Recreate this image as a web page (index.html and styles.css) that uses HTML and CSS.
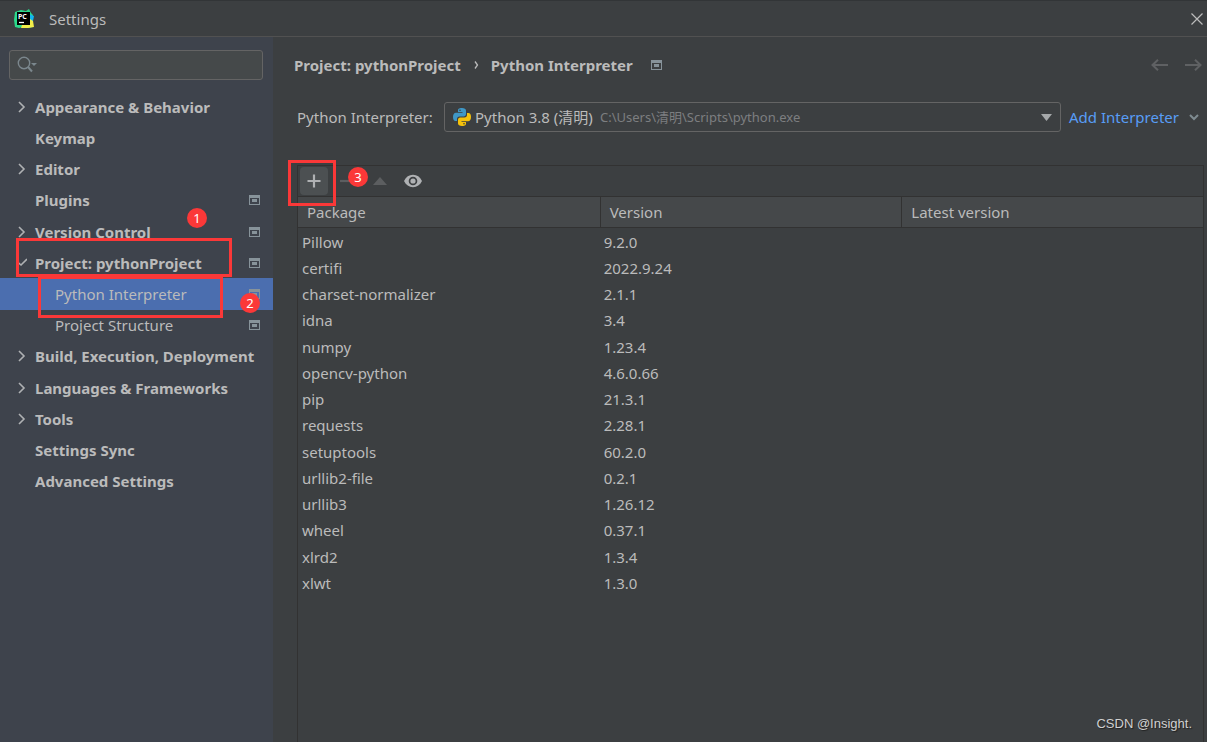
FILE: index.html
```html
<!DOCTYPE html>
<html lang="en">
<head>
<meta charset="utf-8">
<title>Settings</title>
<link rel="stylesheet" href="styles.css">
</head>
<body>
<svg class="defs" aria-hidden="true">
  <symbol id="right" viewBox="0 0 10 12"><path d="M2 1l5 5-5 5" fill="none" stroke="#afb1b3" stroke-width="1.600"/></symbol>
  <symbol id="down" viewBox="0 0 10 12"><path d="M0 4.500L4 8l6-6" fill="none" stroke="#afb1b3" stroke-width="1.600"/></symbol>
  <symbol id="scope" viewBox="0 0 11 10"><path d="M0 0h11v10H0zM1 3v6h9V3z" fill="#87939a" fill-rule="evenodd"/><path d="M3 4h5v3H3z" fill="#87939a"/></symbol>
</svg>
<div class="window">
  <header class="titlebar">
    <svg class="logo" viewBox="0 0 20 20" aria-hidden="true">
      <path d="M1 3l6-2 5 1 3-2 2 4 2 2-1 5 1 7-5 1-5-1-4 1-4-1-1-7z" fill="#2bd98b"/>
      <path d="M15 5l5 2-1 5-4 1z" fill="#12b5ee"/>
      <path d="M16 10l3 2 1 6-6 1-7 0 1-3z" fill="#f3ee4a"/>
      <path d="M3 3h13v13H3z" fill="#000"/>
      <text class="logo-text" x="4" y="10">PC</text>
      <path d="M5 13.500h5" stroke="#fff" stroke-width="1.300"/>
    </svg>
    <h1 class="title">Settings</h1>
    <button class="icon-btn close" aria-label="Close"><svg width="12" height="12" viewBox="0 0 12 12"><path d="M.5.5l11 11M11.500.5l-11 11" stroke="#bbb" stroke-width="1.200"/></svg></button>
  </header>
  <div class="body">
    <aside class="sidebar">
      <div class="search">
        <svg class="search-icon" width="22" height="18" viewBox="0 0 22 18" aria-hidden="true"><circle cx="7" cy="7" r="5.700" fill="none" stroke="#7b878d" stroke-width="1.400"/><path d="M11 11l4 4.500" stroke="#7b878d" stroke-width="2"/><path d="M14 7h6l-3 3z" fill="#7b878d"/></svg>
        <input class="search-input" type="text" aria-label="Search settings">
      </div>
      <nav class="nav" aria-label="Settings categories">
        <a class="item" href="#"><svg class="arrow"><use href="#right"/></svg><span class="label">Appearance &amp; Behavior</span></a>
        <a class="item" href="#"><span class="arrow"></span><span class="label">Keymap</span></a>
        <a class="item" href="#"><svg class="arrow"><use href="#right"/></svg><span class="label">Editor</span></a>
        <a class="item" href="#"><span class="arrow"></span><span class="label">Plugins</span><svg class="scope"><use href="#scope"/></svg></a>
        <a class="item" href="#"><svg class="arrow"><use href="#right"/></svg><span class="label">Version Control</span><svg class="scope"><use href="#scope"/></svg><span class="badge badge-one">1</span></a>
        <a class="item" href="#"><svg class="arrow"><use href="#down"/></svg><span class="label">Project: pythonProject</span><svg class="scope"><use href="#scope"/></svg><span class="mark mark-project"></span></a>
        <a class="item child selected" href="#"><span class="label">Python Interpreter</span><svg class="scope"><use href="#scope"/></svg><span class="mark mark-interpreter"></span><span class="badge badge-two">2</span></a>
        <a class="item child" href="#"><span class="label">Project Structure</span><svg class="scope"><use href="#scope"/></svg></a>
        <a class="item" href="#"><svg class="arrow"><use href="#right"/></svg><span class="label">Build, Execution, Deployment</span></a>
        <a class="item" href="#"><svg class="arrow"><use href="#right"/></svg><span class="label">Languages &amp; Frameworks</span></a>
        <a class="item" href="#"><svg class="arrow"><use href="#right"/></svg><span class="label">Tools</span></a>
        <a class="item" href="#"><span class="arrow"></span><span class="label">Settings Sync</span></a>
        <a class="item" href="#"><span class="arrow"></span><span class="label">Advanced Settings</span></a>
      </nav>
    </aside>
    <main class="main">
      <div class="crumbs">
        <span>Project: pythonProject</span>
        <svg width="5" height="8" viewBox="0 0 5 8" aria-hidden="true"><path d="M1 .5l2.500 3.500L1 7.500" fill="none" stroke="#bbb" stroke-width="1.300"/></svg>
        <span>Python Interpreter</span>
        <svg class="scope crumb-scope"><use href="#scope"/></svg>
        <div class="history">
          <button class="icon-btn" aria-label="Back"><svg width="17" height="12" viewBox="0 0 17 12"><path d="M7 .8L1.500 6 7 11.200M1.500 6H17" fill="none" stroke="#5f6163" stroke-width="2"/></svg></button>
          <button class="icon-btn" aria-label="Forward"><svg width="17" height="12" viewBox="0 0 17 12"><path d="M10 .8L15.500 6 10 11.200M15.500 6H0" fill="none" stroke="#5f6163" stroke-width="2"/></svg></button>
        </div>
      </div>
      <div class="chooser">
        <label class="chooser-label" for="interpreter">Python Interpreter:</label>
        <div class="combo">
          <select id="interpreter" class="select"><option>Python 3.8 (清明)</option></select>
          <div class="combo-face">
            <svg width="18" height="18" viewBox="0 0 18 18" aria-hidden="true"><path d="M9 0C5.500 0 5 1.200 5 2.500V4h4.500v.8H3C1 4.800 0 6.500 0 9s1 4 2.500 4H4v-2c0-1.500 1-2.500 2.500-2.500h4.300C12 8.500 13 7.500 13 6.300V2.500C13 1 11.500 0 9 0z" fill="#3f97c6"/><path d="M9 18c3.500 0 4-1.200 4-2.500V14H8.500v-.8H15c2 0 3-1.700 3-4.200s-1-4-2.500-4H14v2c0 1.500-1 2.500-2.500 2.500H7.200C6 9.500 5 10.500 5 11.700v3.800C5 17 6.500 18 9 18z" fill="#f5c20b"/><circle cx="7" cy="2.300" r=".8" fill="#3c3f41"/><circle cx="11" cy="15.700" r=".8" fill="#3c3f41"/></svg>
            <span class="path">C:\Users\清明\Scripts\python.exe</span>
            <svg width="11" height="7" viewBox="0 0 11 7" aria-hidden="true"><path d="M0 0h11L5.500 7z" fill="#a5a8aa"/></svg>
          </div>
        </div>
        <button class="add-link">Add Interpreter<svg width="10" height="7" viewBox="0 0 10 7" aria-hidden="true"><path d="M1 1l4 4 4-4" fill="none" stroke="#7f8b91" stroke-width="2"/></svg></button>
      </div>
      <section class="packages">
        <div class="toolbar">
          <button class="tool active" aria-label="Install"><svg width="14" height="14" viewBox="0 0 14 14"><path d="M7 .5v13M.5 7h13" stroke="#afb1b3" stroke-width="2.200"/></svg><span class="mark mark-add"></span></button>
          <button class="tool" aria-label="Uninstall"><svg width="14" height="14" viewBox="0 0 14 14"><path d="M0 7h13" stroke="#5c5e60" stroke-width="2.200"/></svg><span class="badge badge-three">3</span></button>
          <button class="tool" aria-label="Upgrade"><svg width="14" height="14" viewBox="0 0 14 14"><path d="M0 11l7-8 7 8z" fill="#5c5e60"/></svg></button>
          <button class="tool" aria-label="Show early releases"><svg width="18" height="14" viewBox="0 0 18 14"><path d="M0 7C2 3 5 .8 9 .8S16 3 18 7c-2 4-5 6.200-9 6.200S2 11 0 7zM9 2.700a4.300 4.300 0 1 0 0 8.600 4.300 4.300 0 0 0 0-8.600z" fill="#afb1b3" fill-rule="evenodd"/><circle cx="9" cy="7" r="2.600" fill="#afb1b3"/></svg></button>
        </div>
        <table class="table">
          <thead><tr><th>Package</th><th>Version</th><th>Latest version</th></tr></thead>
          <tbody>
            <tr><td>Pillow</td><td>9.2.0</td><td></td></tr>
            <tr><td>certifi</td><td>2022.9.24</td><td></td></tr>
            <tr><td>charset-normalizer</td><td>2.1.1</td><td></td></tr>
            <tr><td>idna</td><td>3.4</td><td></td></tr>
            <tr><td>numpy</td><td>1.23.4</td><td></td></tr>
            <tr><td>opencv-python</td><td>4.6.0.66</td><td></td></tr>
            <tr><td>pip</td><td>21.3.1</td><td></td></tr>
            <tr><td>requests</td><td>2.28.1</td><td></td></tr>
            <tr><td>setuptools</td><td>60.2.0</td><td></td></tr>
            <tr><td>urllib2-file</td><td>0.2.1</td><td></td></tr>
            <tr><td>urllib3</td><td>1.26.12</td><td></td></tr>
            <tr><td>wheel</td><td>0.37.1</td><td></td></tr>
            <tr><td>xlrd2</td><td>1.3.4</td><td></td></tr>
            <tr><td>xlwt</td><td>1.3.0</td><td></td></tr>
          </tbody>
        </table>
      </section>
    </main>
  </div>
  <div class="watermark">CSDN @Insight.</div>
</div>
</body>
</html>
```
FILE: styles.css
```css
* { box-sizing: border-box; }
body {
  margin: 0;
  background: #3c3f41;
  color: #bbbbbb;
  font: 15px/20px "Noto Sans", "Noto Sans CJK SC", sans-serif;
}
button, input, select { font: inherit; color: inherit; }
button { padding: 0; border: 0; background: none; }
svg { display: block; flex: none; }
.defs { position: absolute; width: 0; height: 0; }
.window { position: relative; display: flex; flex-direction: column; min-height: 100vh; }

.titlebar {
  display: flex;
  align-items: center;
  height: 37px;
  padding: 0 4px 0 14px;
  border-top: 1px solid #323537;
  border-bottom: 1px solid #515151;
}
.logo { width: 20px; height: 20px; }
.logo-text { fill: #ffffff; font: 700 7px "Noto Sans", sans-serif; }
.title { flex: 1; margin: 0 0 0 15px; font-size: 15px; font-weight: 400; }

.body { display: flex; flex: 1; }
.sidebar { flex: none; width: 273px; padding-top: 13px; background: #3e434c; }
.search {
  display: flex;
  align-items: center;
  height: 30px;
  margin: 0 10px 0 9px;
  padding-left: 7px;
  border: 1px solid #646464;
  border-radius: 3px;
  background: #45494a;
}
.search-input { flex: 1; min-width: 0; border: 0; outline: 0; background: none; }

.nav { display: grid; grid-auto-rows: 1fr; height: 406px; margin-top: 11px; }
.item {
  position: relative;
  display: flex;
  align-items: center;
  padding: 0 13px 0 17px;
  color: inherit;
  font-weight: 700;
  text-decoration: none;
  white-space: nowrap;
}
.arrow { flex: none; width: 10px; height: 12px; margin-right: 8px; }
.label { flex: 1; }
.scope { width: 11px; height: 10px; }
.child { padding-left: 55px; font-weight: 400; }
.selected { background: #4b6eaf; }

.badge {
  position: absolute;
  z-index: 2;
  width: 20px;
  height: 20px;
  border-radius: 50%;
  background: #fb3838;
  color: #ffffff;
  font-size: 13px;
  font-weight: 400;
  text-align: center;
}
.badge-one { left: 187px; top: -8px; }
.badge-two { left: 240px; top: 15px; }
.badge-three { left: 15px; top: 0; }
.mark { position: absolute; z-index: 1; border: 3px solid #fb3838; }
.mark-project { left: 16px; top: -9px; width: 216px; height: 39px; }
.mark-interpreter { left: 38px; top: -2px; width: 185px; height: 42px; }
.mark-add { left: -12px; top: -7px; width: 48px; height: 46px; }

.main { flex: 1; display: flex; flex-direction: column; min-width: 0; padding: 18px 3px 0 24px; }
.crumbs { display: flex; align-items: center; margin-left: -3px; font-weight: 700; }
.crumbs > svg { margin: 0 12px 0 13px; }
.crumbs > .crumb-scope { margin: 0 0 0 18px; }
.history { display: flex; gap: 17px; margin-left: auto; padding-right: 2px; }

.chooser { display: flex; align-items: center; margin-top: 27px; }
.chooser-label { min-width: 139px; }
.combo { display: grid; flex: 1; margin: 0 8px; }
.combo > * { grid-area: 1 / 1; }
.select {
  width: 100%;
  height: 30px;
  padding: 0 0 0 30px;
  appearance: none;
  border: 1px solid #646464;
  border-radius: 3px;
  background: #3c3f41;
}
.combo-face { display: flex; align-items: center; padding: 0 9px; pointer-events: none; }
.path { flex: 1; margin-left: 129px; color: #7c7e80; font-size: 13px; }
.add-link {
  display: flex;
  align-items: center;
  justify-content: space-between;
  min-width: 130px;
  margin-right: 5px;
  color: #589df6;
}

.packages { flex: 1; margin-top: 33px; border: 1px solid #323232; border-bottom: 0; }
.toolbar { display: flex; align-items: center; gap: 5px; height: 30px; padding-left: 2px; }
.tool {
  position: relative;
  display: grid;
  place-items: center;
  width: 28px;
  height: 28px;
  border-radius: 4px;
}
.active { background: #4c5052; }

.table { width: 100%; table-layout: fixed; border-collapse: separate; border-spacing: 0; }
.table th {
  height: 32px;
  padding: 0 9px;
  border-top: 1px solid #323232;
  border-bottom: 1px solid #323232;
  background: #45484a;
  font-weight: 400;
  text-align: left;
}
.table th + th { border-left: 1px solid #323232; }
.table td { height: 26px; padding: 0 4px; }
.table tr:nth-child(4n + 1) td { height: 27px; }

.watermark {
  position: absolute;
  right: 15px;
  bottom: 8px;
  color: #d0d0d0;
  font: 13px/20px "Liberation Sans", sans-serif;
  text-shadow: 1px 1px 1px #202020;
}
```
